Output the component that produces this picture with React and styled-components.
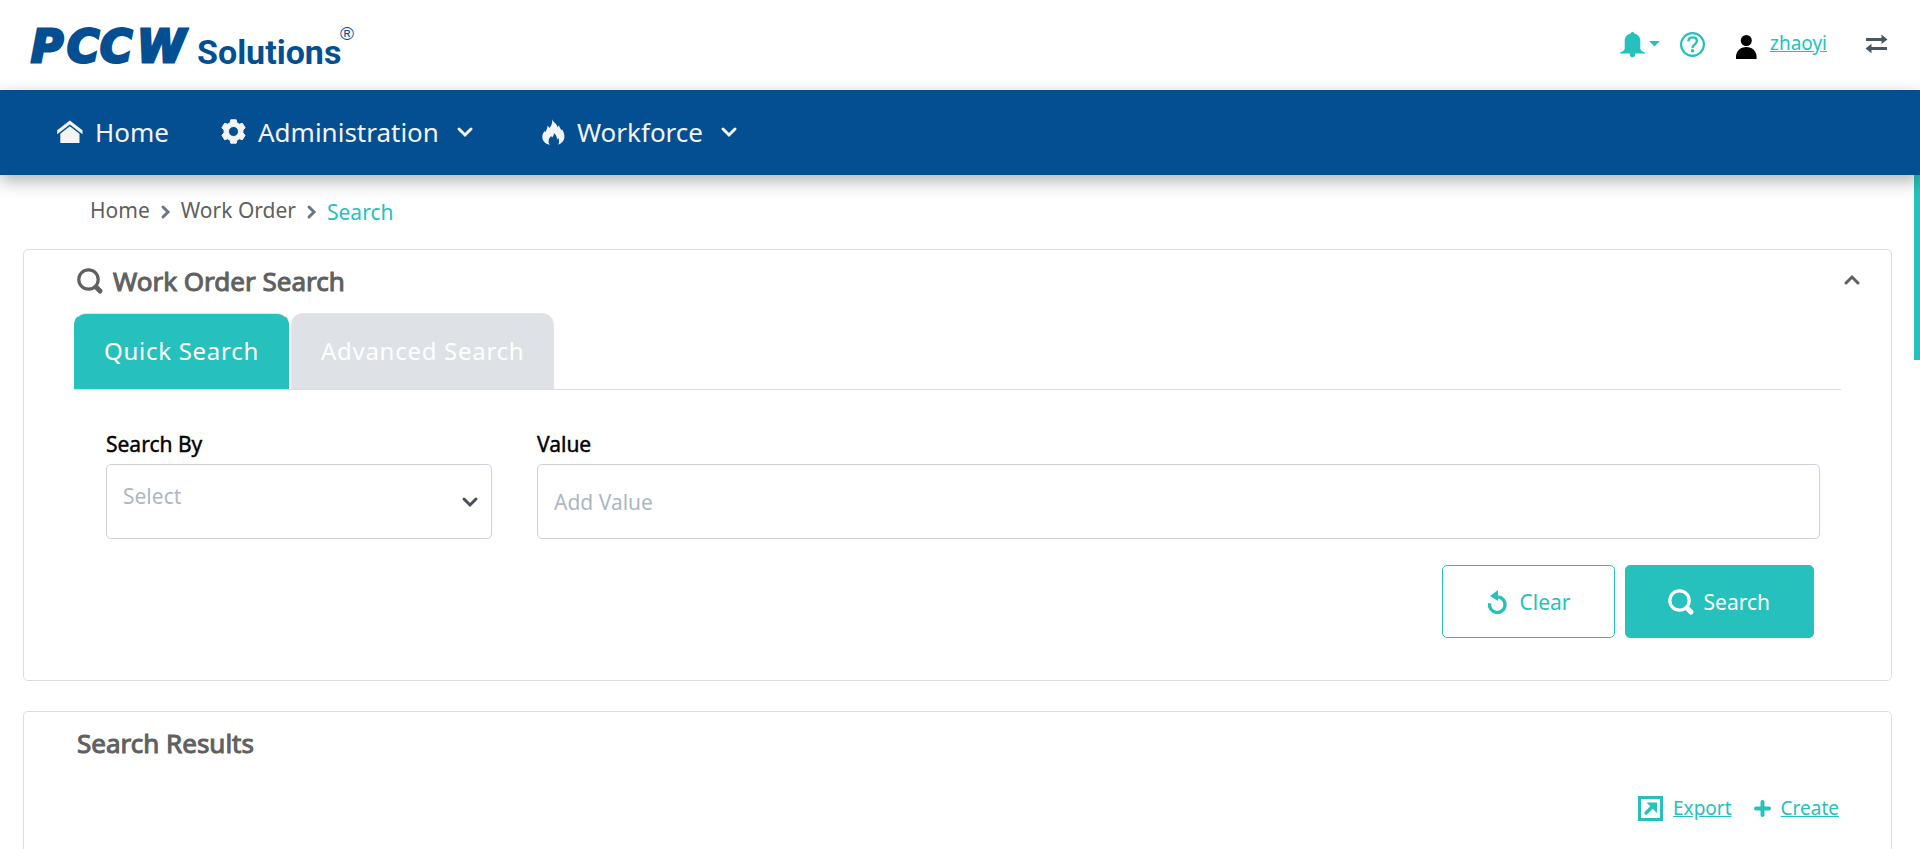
import React from "react";
import styled, { createGlobalStyle, css } from "styled-components";

const teal = "#26c1bc";
const blue = "#034f92";
const grey = "#606060";
const line = "#dcdddf";

const GlobalStyle = createGlobalStyle`
  *, *::before, *::after { box-sizing: border-box; }
  body {
    margin: 0;
    background: #fff;
    color: ${grey};
    font-family: "Noto Sans", "Open Sans", sans-serif;
    font-size: 21px;
    line-height: 28px;
  }
  button, input, select { font: inherit; }
  svg { display: block; flex: none; overflow: visible; }
`;

const Shell = styled.div`
  height: 100vh;
  display: flex;
  flex-direction: column;
  overflow: hidden;
`;

const Header = styled.header`
  flex: none;
  display: flex;
  align-items: center;
  justify-content: space-between;
  height: 90px;
  padding: 0 32px 0 30px;
`;

const Tools = styled.div`
  display: flex;
  align-items: center;
`;

const IconButton = styled.button`
  display: flex;
  align-items: center;
  gap: 4px;
  padding: 0 0 2px;
  border: 0;
  background: none;
  color: ${(p) => p.$color || teal};
  margin-left: ${(p) => p.$space || 0}px;
  cursor: pointer;
`;

const TextLink = styled.a`
  display: flex;
  align-items: center;
  gap: ${(p) => p.$gap || 10}px;
  color: ${teal};
  font-size: 19px;
  line-height: 26px;
  text-decoration: none;
  span { text-decoration: underline; }
`;

const UserLink = styled(TextLink)`
  margin: 0 38px 0 31px;
  padding-bottom: 4px;
`;

const Nav = styled.nav`
  position: relative;
  z-index: 2;
  flex: none;
  display: flex;
  align-items: center;
  height: 85px;
  padding: 0 57px 2px;
  background: ${blue};
  box-shadow: 0 6px 16px rgba(0, 0, 0, 0.3);
`;

const NavItem = styled.a`
  display: flex;
  align-items: center;
  gap: 12px;
  margin-right: ${(p) => p.$after || 0}px;
  color: #f4f4f4;
  font-size: 26px;
  line-height: 36px;
  text-decoration: none;
  svg:last-child:not(:first-child) { margin-left: 6px; }
`;

const Body = styled.div`
  position: relative;
  flex: 1;
  min-height: 0;
`;

const ScrollThumb = styled.div`
  position: absolute;
  top: 0;
  right: 0;
  width: 6px;
  height: 185px;
  background: ${teal};
`;

const Main = styled.main`
  height: 100%;
  overflow-y: auto;
  scrollbar-width: none;
  padding: 0 28px 30px 23px;
`;

const Crumbs = styled.nav`
  display: flex;
  align-items: center;
  gap: 11px;
  height: 74px;
  padding: 0 67px 4px;
  color: #6d7782;
  svg { margin-top: 4px; }
`;

const Crumb = styled.a`
  color: ${(p) => (p.$current ? teal : grey)};
  padding-top: ${(p) => (p.$current ? 4 : 0)}px;
  text-decoration: none;
`;

const Card = styled.section`
  border: 1px solid ${line};
  border-radius: 5px;
  padding: 13px 50px 42px;
  margin-bottom: 30px;
  min-height: ${(p) => p.$min || 0}px;
`;

const CardHead = styled.div`
  display: flex;
  align-items: center;
  justify-content: space-between;
  margin: 0 -19px 0 3px;
`;

const Title = styled.h2`
  display: flex;
  align-items: center;
  gap: 10px;
  margin: 0;
  font-size: 26px;
  line-height: 36px;
  font-weight: 400;
  -webkit-text-stroke: 1px currentColor;
`;

const Tabs = styled.div`
  display: flex;
  gap: 2px;
  margin-top: 14px;
  border-bottom: 1px solid ${line};
`;

const Tab = styled.button`
  height: 76px;
  padding: 0 29px 2px;
  border: 1px solid #e4e5e7;
  border-bottom: 0;
  border-radius: 12px 12px 0 0;
  background: #dee2e6;
  color: #fff;
  font-size: 24px;
  letter-spacing: 0.03em;
  cursor: pointer;
  ${(p) => p.$active && css`
    background: ${teal};
    border-color: #e4e5e7 ${teal};
  `}
`;

const Form = styled.form`
  padding: 40px 21px 0 32px;
`;

const Fields = styled.div`
  display: grid;
  grid-template-columns: 386fr 1283fr;
  gap: 45px;
`;

const Field = styled.div`
  display: flex;
  flex-direction: column;
  gap: 6px;
  label {
    color: #000;
    -webkit-text-stroke: thin #000;
  }
`;

const control = css`
  width: 100%;
  height: 75px;
  padding: 0 16px;
  border: 1px solid #cdd1d9;
  border-radius: 5px;
  background: #fff;
  color: #adb7c2;
  outline: none;
`;

const Input = styled.input`
  ${control}
  &::placeholder { color: #adb7c2; opacity: 1; }
`;

const SelectBox = styled.div`
  position: relative;
  color: #4a4f57;
  svg {
    position: absolute;
    right: 14px;
    top: 33px;
    pointer-events: none;
  }
`;

const Select = styled.select`
  ${control}
  appearance: none;
  padding-bottom: 12px;
`;

const Actions = styled.div`
  display: flex;
  justify-content: flex-end;
  gap: 10px;
  margin: 26px 6px 0 0;
`;

const Button = styled.button`
  display: flex;
  align-items: center;
  gap: ${(p) => (p.$primary ? 10 : 13)}px;
  height: 73px;
  padding: ${(p) => (p.$primary ? "0 43px 0 42px" : "0 43px 0 45px")};
  border: 1px solid ${teal};
  border-radius: 5px;
  background: ${(p) => (p.$primary ? teal : "#fff")};
  color: ${(p) => (p.$primary ? "#fff" : teal)};
  cursor: pointer;
`;

const Links = styled.div`
  display: flex;
  justify-content: flex-end;
  gap: 22px;
  margin-top: 34px;
  padding-right: 2px;
`;

const Logo = () => (
  <svg width="326" height="70" viewBox="0 0 326 70" role="img" aria-label="PCCW Solutions" fill={blue}>
    <g fontFamily="'DejaVu Sans', sans-serif" fontWeight="700" fontStyle="italic" fontSize="44" stroke={blue} strokeWidth="3">
      <text x="1" y="52">P</text>
      <text x="37" y="52">C</text>
      <text x="70" y="52">C</text>
      <text x="107" y="52">W</text>
    </g>
    <text x="167" y="54" fontFamily="Roboto, sans-serif" fontWeight="700" fontSize="34">Solutions</text>
    <text x="310" y="30" fontFamily="'Liberation Sans', sans-serif" fontSize="19">®</text>
  </svg>
);

const Chevron = ({ d = "down", w = 3 }) => {
  const paths = {
    down: ["0 0 16 10", 16, 10, "M2 2l6 6 6-6"],
    up: ["0 0 16 10", 16, 10, "M2 8l6-6 6 6"],
    right: ["0 0 9 14", 9, 14, "M2 2l5 5-5 5"],
  }[d];
  return (
    <svg viewBox={paths[0]} width={paths[1]} height={paths[2]} fill="none" stroke="currentColor" strokeWidth={w} strokeLinecap="round">
      <path d={paths[3]} />
    </svg>
  );
};

const SearchIcon = () => (
  <svg width="26" height="26" viewBox="0 0 26 26" fill="none" stroke="currentColor">
    <circle cx="11.5" cy="11.5" r="9.7" strokeWidth="3.2" />
    <path d="M19 19l4 4" strokeWidth="5" strokeLinecap="round" />
  </svg>
);

const BellIcon = () => (
  <svg width="25" height="25" viewBox="0 0 25 25" fill="currentColor">
    <path d="M12.5 0c1 0 1.6.6 1.7 1.6C18 2.300 20.300 5 20.300 9v7.500c0 1.800 1.700 3 4.700 4V21.500H0v-1c3-1 4.700-2.200 4.700-4V9c0-4 2.300-6.700 6.100-7.400C10.900.6 11.500 0 12.500 0z" />
    <path d="M9.800 21h5.400v1.500a2.700 2.700 0 0 1-5.400 0z" />
  </svg>
);

const HelpIcon = () => (
  <svg width="25" height="25" viewBox="0 0 25 25" fill="none" stroke="currentColor">
    <circle cx="12.500" cy="12.500" r="11.400" strokeWidth="2.200" />
    <path d="M8.300 9.300c.2-2.500 2-3.900 4.300-3.900 2.400 0 4.300 1.400 4.300 3.700 0 3.300-4.300 3.400-4.300 6.900" strokeWidth="2.400" />
    <circle cx="12.600" cy="18.700" r="1.800" fill="currentColor" stroke="none" />
  </svg>
);

const UserIcon = () => (
  <svg width="21" height="32" viewBox="0 0 21 32" fill="#000">
    <circle cx="10.300" cy="13.500" r="5.500" />
    <path d="M0 32v-2c0-6 4.500-10 10.300-10S20.600 24 20.600 30v2z" />
  </svg>
);

const SwapIcon = () => (
  <svg width="23" height="20" viewBox="0 0 23 20" fill="#495663">
    <path d="M1 4h15.500V0.500L22.500 5.500l-6 4.500V7H1z" />
    <path d="M22 13H6.500V9.700L0.500 14.500l6 4.700V16H22z" />
  </svg>
);

const HomeIcon = () => (
  <svg width="26" height="24" viewBox="0 0 26 24" fill="currentColor">
    <path d="M12.800 0.500L25.500 10.300v4L12.800 4.600 0.200 14.300v-4z" />
    <path d="M12.800 6.300l9.700 7.400V23H3.300v-9.300z" />
  </svg>
);

const GearIcon = () => (
  <svg width="25" height="25" viewBox="0 0 25 25" fill="currentColor" fillRule="evenodd">
    <path d="M9.800.8h5.400l.7 3 2.500 1.400 3-.9 2.700 4.500-2.200 2.300v2.800l2.200 2.300-2.700 4.500-3-.9-2.500 1.400-.7 3H9.800l-.7-3-2.500-1.400-3 .9-2.700-4.500 2.200-2.300v-2.800L.9 8.800l2.700-4.500 3 .9 2.500-1.400zM12.500 7.500a5 5 0 1 0 0 10 5 5 0 0 0 0-10z" stroke="currentColor" strokeLinejoin="round" />
  </svg>
);

const FlameIcon = () => (
  <svg width="23" height="26" viewBox="0 0 23 26" fill="currentColor">
    <path d="M10 0c.7 3.300 5 4.200 5.600 8.300l1.400-2c.2 2.200 1.700 3.200 2.400 5.200l.7-1.200c1.500 2.600 2.500 5 2.300 8-.2 3.500-2.600 6.100-6.300 7.400 1.400-2.200 1.200-4.600.2-6.700l-1.200 1.500c-.2-3-1.300-5-3.200-6.500.2 2-.7 3.300-1.800 4.400l-1-1.400c-2.700 2.700-3.400 5.900-1.500 8.900C3.200 24.700.4 22 .3 18.300c-.1-2.600 1-4.500 2.200-6.300l.8 1.200C4.800 10.500 5.500 9 5.600 6.600L7.500 9C9.700 6.500 10.600 3.500 10 0z" />
  </svg>
);

const ResetIcon = () => (
  <svg width="19" height="24" viewBox="0 0 19 24" fill="none" stroke="currentColor">
    <path d="M1.600 13.200a7.800 7.800 0 1 0 8.500-6.300" strokeWidth="3.400" />
    <path d="M10 0v11L2 6z" fill="currentColor" stroke="none" />
  </svg>
);

const ExportIcon = () => (
  <svg width="25" height="25" viewBox="0 0 25 25" fill="none" stroke="currentColor">
    <rect x="1.500" y="1.500" width="22" height="22" strokeWidth="3" />
    <path d="M8 17l7-7" strokeWidth="3.400" strokeLinecap="round" />
    <path d="M8.500 6.500H19V17z" fill="currentColor" stroke="none" />
  </svg>
);

const PlusIcon = () => (
  <svg width="17" height="17" viewBox="0 0 17 17" fill="none" stroke="currentColor" strokeWidth="4" strokeLinecap="round">
    <path d="M8.500 2v13M2 8.500h13" />
  </svg>
);

export default function App() {
  return (
    <Shell>
      <GlobalStyle />
      <Header>
        <Logo />
        <Tools>
          <IconButton aria-label="Notifications">
            <BellIcon />
            <svg width="11" height="6" viewBox="0 0 11 6" fill="currentColor"><path d="M0 0h11L5.500 5.500z" /></svg>
          </IconButton>
          <IconButton aria-label="Help" $space={20}><HelpIcon /></IconButton>
          <UserLink href="#profile" $gap={13}>
            <UserIcon />
            <span>zhaoyi</span>
          </UserLink>
          <IconButton aria-label="Switch account"><SwapIcon /></IconButton>
        </Tools>
      </Header>
      <Nav>
        <NavItem href="#home" $after={52}><HomeIcon />Home</NavItem>
        <NavItem href="#administration" $after={69}><GearIcon />Administration<Chevron /></NavItem>
        <NavItem href="#workforce"><FlameIcon />Workforce<Chevron /></NavItem>
      </Nav>
      <Body>
        <Main>
          <Crumbs aria-label="Breadcrumb">
            <Crumb href="#home">Home</Crumb>
            <Chevron d="right" />
            <Crumb href="#orders">Work Order</Crumb>
            <Chevron d="right" />
            <Crumb href="#search" $current>Search</Crumb>
          </Crumbs>
          <Card>
            <CardHead>
              <Title><SearchIcon />Work Order Search</Title>
              <IconButton aria-label="Collapse" $color={grey}><Chevron d="up" /></IconButton>
            </CardHead>
            <Tabs role="tablist">
              <Tab role="tab" aria-selected="true" $active>Quick Search</Tab>
              <Tab role="tab" aria-selected="false">Advanced Search</Tab>
            </Tabs>
            <Form>
              <Fields>
                <Field>
                  <label htmlFor="search-by">Search By</label>
                  <SelectBox>
                    <Select id="search-by" defaultValue="">
                      <option value="">Select</option>
                    </Select>
                    <Chevron />
                  </SelectBox>
                </Field>
                <Field>
                  <label htmlFor="value">Value</label>
                  <Input id="value" placeholder="Add Value" />
                </Field>
              </Fields>
              <Actions>
                <Button type="reset"><ResetIcon />Clear</Button>
                <Button type="submit" $primary><SearchIcon />Search</Button>
              </Actions>
            </Form>
          </Card>
          <Card $min={300}>
            <CardHead><Title>Search Results</Title></CardHead>
            <Links>
              <TextLink href="#export"><ExportIcon /><span>Export</span></TextLink>
              <TextLink href="#create"><PlusIcon /><span>Create</span></TextLink>
            </Links>
          </Card>
        </Main>
        <ScrollThumb />
      </Body>
    </Shell>
  );
}
